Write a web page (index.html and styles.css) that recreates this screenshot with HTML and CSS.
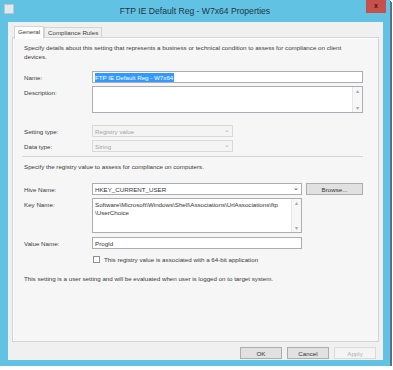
FILE: index.html
```html
<!DOCTYPE html>
<html lang="en">
<head>
    <meta charset="UTF-8">
    <title>FTP IE Default Reg - W7x64 Properties</title>
    <link rel="stylesheet" href="styles.css">
</head>
<body>

    <div class="window">
        <div class="titlebar">
            <span class="app-icon"></span>
            <span class="title">FTP IE Default Reg - W7x64 Properties</span>
            <span class="close">x</span>
        </div>

        <div class="client">
            <div class="tabs">
                <span class="tab active">General</span>
                <span class="tab">Compliance Rules</span>
            </div>

            <div class="panel">
                <p class="intro">Specify details about this setting that represents a business or technical condition to assess for compliance on client devices.</p>

                <div class="row r-name">
                    <span class="label">Name:</span>
                    <div class="box w-full"><span class="selected">FTP IE Default Reg - W7x64</span></div>
                </div>
                <div class="row r-desc top">
                    <span class="label">Description:</span>
                    <div class="box area w-full desc">
                        <span class="text"></span>
                        <span class="scroll"><i>&#9652;</i><i>&#9662;</i></span>
                    </div>
                </div>

                <div class="row r-setting">
                    <span class="label">Setting type:</span>
                    <div class="box select disabled w-short"><span class="text">Registry value</span><span class="arrow">&#8964;</span></div>
                </div>
                <div class="row r-data">
                    <span class="label">Data type:</span>
                    <div class="box select disabled w-short"><span class="text">String</span><span class="arrow">&#8964;</span></div>
                </div>

                <div class="separator"></div>

                <p class="note">Specify the registry value to assess for compliance on computers.</p>

                <div class="row r-hive">
                    <span class="label">Hive Name:</span>
                    <div class="box select w-mid"><span class="text">HKEY_CURRENT_USER</span><span class="arrow dark">&#8964;</span></div>
                    <button class="btn browse">Browse...</button>
                </div>
                <div class="row r-key top">
                    <span class="label">Key Name:</span>
                    <div class="box area w-mid key">
                        <span class="text">Software\Microsoft\Windows\Shell\Associations\UrlAssociations\ftp<br>\UserChoice</span>
                        <span class="scroll"><i>&#9652;</i><i>&#9662;</i></span>
                    </div>
                </div>
                <div class="row r-value">
                    <span class="label">Value Name:</span>
                    <div class="box w-mid"><span class="text">ProgId</span></div>
                </div>
                <div class="row r-check">
                    <span class="label"></span>
                    <span class="checkbox"></span>
                    <span class="check-text">This registry value is associated with a 64-bit application</span>
                </div>

                <p class="note last">This setting is a user setting and will be evaluated when user is logged on to target system.</p>
            </div>

            <div class="buttons">
                <button class="btn">OK</button>
                <button class="btn">Cancel</button>
                <button class="btn off">Apply</button>
            </div>
        </div>
    </div>

</body>
</html>
```

FILE: styles.css
```css
/* page */
body {
    margin: 0;
    background-color: #ffffff;
    font-family: "Liberation Sans", Arial, sans-serif;
    color: #3a3a3a;
}

.window {
    width: 390px;
    height: 366px;
    background-color: #62c2e4;
    box-shadow: 1px 1px 0 #3d7f98, 2px 2px 0 #6a6a6a;
    display: flex;
    flex-direction: column;
}

/* title bar */
.titlebar {
    height: 22px;
    display: grid;
    grid-template-columns: 1fr auto 1fr;
    align-items: start;
}

.app-icon {
    width: 8px;
    height: 8px;
    margin: 4px 0 0 4px;
    background-color: #dfe9ee;
    border: 1px solid #b5c7cf;
}

.title {
    padding-top: 6px;
    font-size: 8.6px;
    color: #1f3444;
}

.close {
    justify-self: end;
    width: 20px;
    height: 13px;
    margin-right: 4px;
    background-color: #c7504b;
    color: #3b1a18;
    font-size: 7px;
    font-weight: bold;
    text-align: center;
    line-height: 12px;
}

/* client area */
.client {
    flex: 1;
    margin: 0 7px 6px 8px;
    background-color: #f0f0f0;
    padding: 4px 4px 0 4px;
    display: flex;
    flex-direction: column;
    font-size: 6.2px;
}

.tabs {
    display: flex;
    height: 11px;
    padding-left: 2px;
}

.tab {
    padding: 0 3px;
    line-height: 10px;
    border: 1px solid #d4d4d4;
    border-bottom: none;
    margin-top: 1px;
    background-color: #f0f0f0;
}

.tab.active {
    background-color: #ffffff;
    margin-top: 0;
    position: relative;
    z-index: 1;
    height: 12px;
}

.panel {
    height: 298px;
    border: 1px solid #d4d4d4;
    box-shadow: inset 1px 1px 0 #ffffff;
    background-color: #f6f6f6;
    padding: 5px 15px 0 11px;
}

p {
    margin: 0;
}

.intro {
    line-height: 9px;
    width: 335px;
}

.note {
    line-height: 9px;
}

/* form rows */
.row {
    display: flex;
    align-items: center;
}

.row.top {
    align-items: flex-start;
}

.row.top .label {
    padding-top: 3px;
}

.label {
    width: 68px;
    flex-shrink: 0;
}

.r-name { margin-top: 10px; }
.r-desc { margin-top: 3px; }
.r-setting { margin-top: 12px; }
.r-data { margin-top: 3px; }
.r-hive { margin-top: 12px; }
.r-key { margin-top: 3px; }
.r-value { margin-top: 4px; }
.r-check { margin-top: 7px; }

.box {
    height: 12px;
    box-sizing: border-box;
    border: 1px solid #abadb3;
    background-color: #ffffff;
    padding-left: 2px;
    display: flex;
    align-items: center;
    color: #333333;
}

.w-full { width: 271px; }
.w-short { width: 141px; }
.w-mid { width: 210px; }

.selected {
    background-color: #3399ff;
    color: #ffffff;
    line-height: 9px;
    padding-right: 1px;
}

.box.select .text {
    flex: 1;
}

.arrow {
    width: 8px;
    color: #b8b8b8;
    font-size: 7px;
    line-height: 6px;
    margin-top: -3px;
}

.arrow.dark {
    color: #333333;
}

.box.disabled {
    background-color: #f4f4f4;
    border-color: #d9d9d9;
    color: #a5a5a5;
}

.box.area {
    align-items: stretch;
    padding-right: 0;
}

.box.area .text {
    flex: 1;
    padding-top: 2px;
    line-height: 8px;
}

.desc { height: 27px; }
.key { height: 35px; }

.scroll {
    width: 9px;
    border-left: 1px solid #e6e6e6;
    background-color: #f7f7f7;
    display: flex;
    flex-direction: column;
    justify-content: space-between;
    align-items: center;
    color: #a8a8a8;
    font-size: 6px;
}

.scroll i {
    font-style: normal;
    line-height: 8px;
}

.separator {
    height: 1px;
    margin: 4px 0 5px -2px;
    background-color: #d5d5d5;
}

.btn {
    height: 12px;
    box-sizing: border-box;
    padding: 0;
    border: 1px solid #adadad;
    background-color: #e1e1e1;
    font-family: "Liberation Sans", Arial, sans-serif;
    font-size: 6.2px;
    color: #333333;
}

.browse {
    width: 57px;
    margin-left: 4px;
}

.checkbox {
    width: 7px;
    height: 7px;
    box-sizing: border-box;
    border: 1px solid #8f8f8f;
    background-color: #ffffff;
    margin-left: 1px;
    margin-right: 4px;
}

.note.last {
    margin-top: 11px;
}

/* dialog buttons */
.buttons {
    display: flex;
    justify-content: flex-end;
    gap: 5px;
    padding: 5px 3px 0 0;
}

.buttons .btn {
    width: 42px;
}

.btn.off {
    background-color: #f4f4f4;
    border-color: #dadada;
    color: #b0b0b0;
}
```
